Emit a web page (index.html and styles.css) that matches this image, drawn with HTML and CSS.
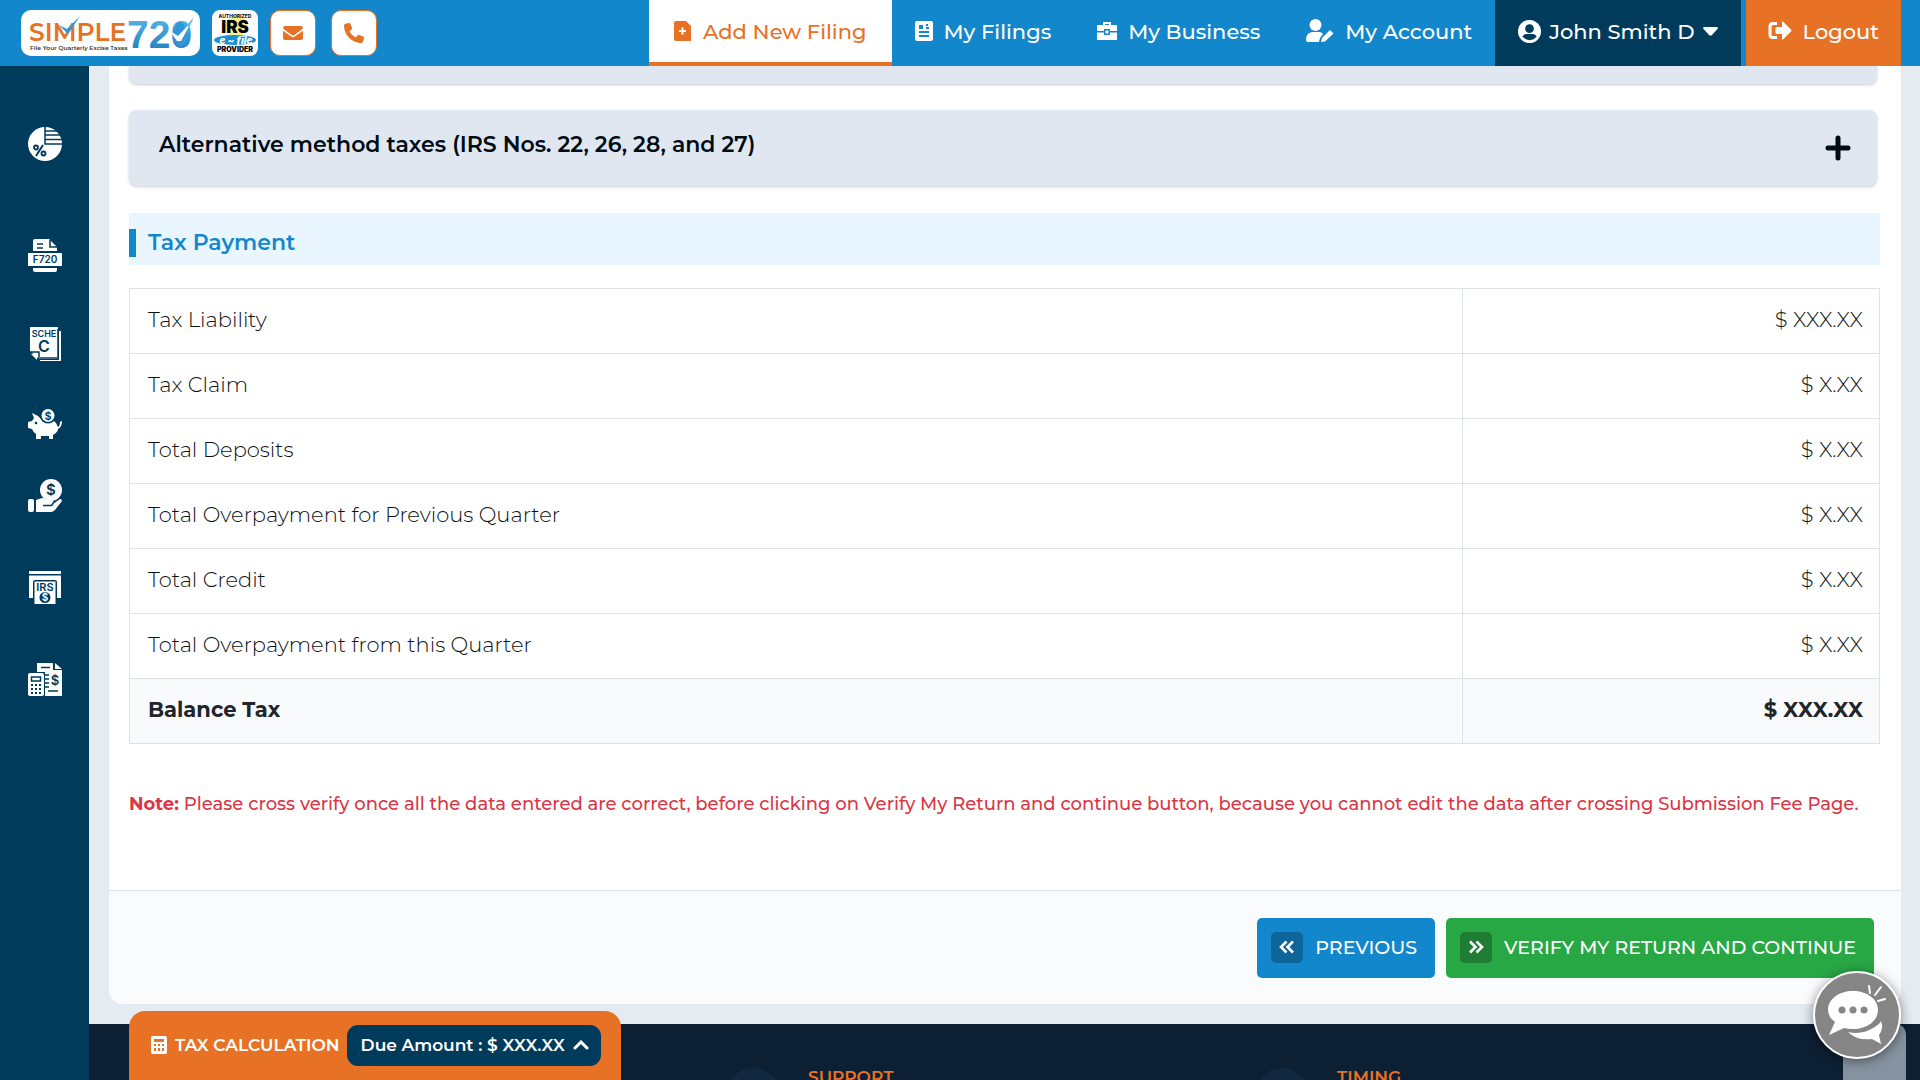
FILE: index.html
```html
<!DOCTYPE html>
<html lang="en">
<head>
<meta charset="utf-8">
<meta name="viewport" content="width=device-width, initial-scale=1">
<title>Simple720 - Tax Payment</title>
<link rel="stylesheet" href="styles.css">
</head>
<body>
<header class="topbar">
  <div class="brand">
    <a class="logo" href="#" aria-label="Simple720 home">
      <svg width="179" height="46" viewBox="0 0 179 46">
        <defs>
          <linearGradient id="blue" x1="0" y1="0" x2="0" y2="1"><stop offset="0" stop-color="#5cbcec"/><stop offset="1" stop-color="#1b78bd"/></linearGradient>
        </defs>
        <text x="8" y="31" class="logo-word">SIMPLE</text>
        <text x="9" y="40" class="logo-tag">File Your Quarterly Excise Taxes</text>
        <text x="106" y="38" class="logo-num" fill="url(#blue)">720</text>
        <ellipse cx="159" cy="24" rx="6" ry="12" fill="#2f97d6"/>
        <path d="M38 15l9 9 12-18-13 13z" fill="#2f97d6"/>
        <path d="M149 21l8 5 14-15-11 20h-4z" fill="#fff"/>
        <path d="M166 15l7-8-5 11z" fill="#5cbcec"/>
      </svg>
    </a>
    <a class="badge" href="#" aria-label="Authorized IRS e-file provider">
      <svg width="46" height="46" viewBox="0 0 46 46">
        <circle cx="25" cy="16" r="11" fill="#f7f08a"/>
        <ellipse cx="23" cy="30" rx="21" ry="5" fill="#1c8fd0"/>
        <text x="23" y="8" class="b-small" text-anchor="middle">AUTHORIZED</text>
        <text x="23" y="23" class="b-irs" text-anchor="middle">IRS</text>
        <text x="24" y="34" class="b-efile" text-anchor="middle">e ~ file</text>
        <text x="23" y="42" class="b-prov" text-anchor="middle">PROVIDER</text>
      </svg>
    </a>
    <a class="contact" href="#" aria-label="Email">
      <svg width="20" height="16" viewBox="0 0 20 16"><path d="M2 1h16a2 2 0 0 1 1.500 3L11 10.300a2 2 0 0 1-2 0L.5 4A2 2 0 0 1 2 1zM0 5.800l8.300 5.800a3 3 0 0 0 3.400 0L20 5.800V13a2 2 0 0 1-2 2H2a2 2 0 0 1-2-2z" fill="#e77225"/></svg>
    </a>
    <a class="contact" href="#" aria-label="Call">
      <svg width="20" height="20" viewBox="0 0 512 512"><path fill="#e77225" d="M165 25c-8-19-28-29-48-23L29 26C12 31 0 46 0 64c0 247 201 448 448 448 18 0 33-12 38-29l24-88c6-20-4-40-23-48l-96-40c-16-7-35-2-46 12l-41 49C234 335 177 278 144 208l49-40c14-12 19-30 12-47z"/></svg>
    </a>
  </div>
  <nav class="nav">
    <a class="nav-link active" href="#">
      <svg width="18" height="20" viewBox="0 0 18 20"><path d="M2 0h10l5 5v15H2q-2 0-2-2V2q0-2 2-2z" fill="currentColor"/><path d="M8.500 6.500v7M5 10h7" stroke="#fff" stroke-width="2"/></svg>
      <span>Add New Filing</span></a>
    <a class="nav-link" href="#">
      <svg width="18" height="20" viewBox="0 0 18 20"><rect width="18" height="20" rx="2" fill="currentColor"/><path d="M4 5h4M4 7h4M11 4h2M11 7h3M4 11h10M4 15h10" stroke="#1387cc" stroke-width="2"/></svg>
      <span>My Filings</span></a>
    <a class="nav-link" href="#">
      <svg width="20" height="20" viewBox="0 0 20 20"><path d="M6 4V1h8v3h5q1 0 1 1v5h-7V8H7v2H0V5q0-1 1-1zm2 0h4V3H8zM0 11.500h7V14h6v-2.500h7V19H0z" fill="currentColor" fill-rule="evenodd"/><rect x="8.500" y="9.500" width="3" height="3" fill="currentColor"/></svg>
      <span>My Business</span></a>
    <a class="nav-link" href="#">
      <svg width="28" height="24" viewBox="0 0 28 24"><circle cx="9.500" cy="6" r="6" fill="currentColor"/><path d="M6 13h7q3 0 4 2l-3 4-1 4H2q-2 0-2-2 0-7 6-8zM15 23l1-4 8-8 3.500 3.500-8.500 8z" fill="currentColor"/></svg>
      <span>My Account</span></a>
    <button class="nav-link user" type="button">
      <svg width="23" height="23" viewBox="0 0 24 24"><circle cx="12" cy="12" r="12" fill="currentColor"/><circle cx="12" cy="9" r="4.500" fill="#003b5c"/><path d="M4.500 17q2-2.500 4-2.500h7q2 0 4 2.500-3 4-7.500 4t-7.500-4z" fill="#003b5c"/></svg>
      <span>John Smith D</span>
      <svg width="15" height="9" viewBox="0 0 15 9"><path d="M1 0h13q1.500.5.500 2L8.500 8.500h-2L.5 2Q-.5.500 1 0z" fill="currentColor"/></svg></button>
    <a class="nav-link logout" href="#">
      <svg width="24" height="20" viewBox="0 0 24 20"><path d="M9 2.500H5Q2 2.500 2 5.500v8q0 3 3 3h4" fill="none" stroke="currentColor" stroke-width="3"/><path d="M14 1.500q0-2 1.500-.5l7.500 7.500q1 1 0 2L15.500 18q-1.500 1.500-1.500-.5V13H9q-1.500 0-1.500-1.500v-4Q7.500 6 9 6h5z" fill="currentColor"/></svg>
      <span>Logout</span></a>
  </nav>
</header>

<div class="shell">
  <aside class="sidebar">
    <a href="#" class="s1" aria-label="Tax rates"><svg width="34" height="34" viewBox="0 0 34 34"><circle cx="17" cy="17" r="17" fill="#fff"/><path d="M17 0v17h17M17 4h13M17 8h15M17 12.500h17" stroke="#003b5c" stroke-width="1.500" fill="none"/><path d="M15 18L8 29" stroke="#003b5c" stroke-width="2"/><g fill="none" stroke="#003b5c" stroke-width="1.800"><circle cx="8" cy="20.500" r="2"/><circle cx="15.500" cy="26.500" r="2"/></g></svg></a>
    <a href="#" class="s2" aria-label="Form 720"><svg width="34" height="34" viewBox="0 0 34 34"><path d="M5 12V2q0-2 2-2h14l8 8v4zM5 29h24v2q0 2-2 2H7q-2 0-2-2zM0 14h34v13H0z" fill="#fff"/><path d="M9 5h6M9 9h6M22 1v7h7" stroke="#003b5c" stroke-width="1.600" fill="none"/><text x="17" y="24" class="ic" font-size="10" text-anchor="middle">F720</text></svg></a>
    <a href="#" class="s3" aria-label="Schedule C"><svg width="32" height="34" viewBox="0 0 32 34"><path d="M1 0h28v32H10L1 24zM30 4h2v30H11v-1h19z" fill="#fff"/><path d="M1 25h9v8M29 2v29H11" stroke="#003b5c" stroke-width="1.500" fill="none"/><path d="M2 27h6v6z" fill="#fff"/><text x="15" y="10" class="ic" font-size="9" text-anchor="middle">SCHE</text><text x="15" y="25" class="ic" font-size="16" text-anchor="middle">C</text></svg></a>
    <a href="#" class="s4" aria-label="Deposits"><svg width="34" height="31" viewBox="0 0 34 31"><path d="M4 4l6 3 4 4h11q4 3 5 7 2-1 2-5l2-1q0 6-4 8 0 3-5 6v4h-4v-3h-8v3H8v-5q-3-2-4-5l-4-1v-6l4-1 2-3z" fill="#fff"/><circle cx="20" cy="6.500" r="8" fill="#003b5c"/><circle cx="20" cy="6.500" r="6.500" fill="#fff"/><circle cx="8" cy="14" r="1.300" fill="#003b5c"/><text x="20" y="10.500" class="ic" font-size="11" text-anchor="middle">$</text></svg></a>
    <a href="#" class="s5" aria-label="Credits"><svg width="34" height="34" viewBox="0 0 34 34"><circle cx="23" cy="11" r="11" fill="#fff"/><text x="23" y="16" class="ic" font-size="15" text-anchor="middle">$</text><rect y="20" width="6" height="13" rx="2" fill="#fff"/><path d="M8 21l6-2q3 0 5 2h5q2 1 1 4l7-5q2 0 2 2l-7 9q-2 2-4 2H8z" fill="#fff"/><path d="M15 26.500h8q2-.5 2-3" fill="none" stroke="#003b5c" stroke-width="1.500"/></svg></a>
    <a href="#" class="s6" aria-label="IRS payment"><svg width="32" height="34" viewBox="0 0 32 34"><path d="M0 0h32v3H0zM0 4.500h32V27h-4V11q0-2-2-2H6q-2 0-2 2v16H0z" fill="#fff"/><path d="M5.500 10.500h21V33h-21z" fill="#fff"/><text x="16" y="20" class="ic" font-size="11" text-anchor="middle">IRS</text><circle cx="16" cy="26.500" r="5.500" fill="#003b5c"/><text x="16" y="30" class="ic light" font-size="10" text-anchor="middle">$</text></svg></a>
    <a href="#" class="s7" aria-label="Tax calculator"><svg width="34" height="34" viewBox="0 0 34 34"><path d="M9 9V0h16v7h9v26H17V9zM27 0l7 6h-7z" fill="#fff"/><rect y="10" width="16" height="23" rx="2" fill="#fff"/><path d="M13 4.500h9M17 12h4M17 16h4M17 20h4M17 24h4M20 28h10" stroke="#003b5c" stroke-width="1.700"/><rect x="3.500" y="14" width="9" height="4" fill="none" stroke="#003b5c" stroke-width="1.500"/><path d="M3 22h10M3 26h10M3 30h10" stroke="#003b5c" stroke-width="2" stroke-dasharray="2 2"/><text x="27" y="22" class="ic" font-size="13" text-anchor="middle">$</text></svg></a>
  </aside>

  <div class="page">
    <main class="card">
      <div class="card-body">
        <div class="accordion-tail"></div>
        <button class="accordion" type="button">
          <span>Alternative method taxes (IRS Nos. 22, 26, 28, and 27)</span>
          <svg width="26" height="26" viewBox="0 0 26 26"><path d="M13 3v20M3 13h20" stroke="#000c14" stroke-width="5" stroke-linecap="round"/></svg>
        </button>
        <h2 class="section-title">Tax Payment</h2>
        <table class="payments">
          <tbody>
            <tr><th scope="row">Tax Liability</th><td>$ XXX.XX</td></tr>
            <tr><th scope="row">Tax Claim</th><td>$ X.XX</td></tr>
            <tr><th scope="row">Total Deposits</th><td>$ X.XX</td></tr>
            <tr><th scope="row">Total Overpayment for Previous Quarter</th><td>$ X.XX</td></tr>
            <tr><th scope="row">Total Credit</th><td>$ X.XX</td></tr>
            <tr><th scope="row">Total Overpayment from this Quarter</th><td>$ X.XX</td></tr>
            <tr class="balance"><th scope="row">Balance Tax</th><td>$ XXX.XX</td></tr>
          </tbody>
        </table>
        <p class="note"><strong>Note:</strong> Please cross verify once all the data entered are correct, before clicking on Verify My Return and continue button, because you cannot edit the data after crossing Submission Fee Page.</p>
      </div>
      <div class="actions">
        <button class="btn prev" type="button"><span class="btn-icon"><svg width="16" height="14" viewBox="0 0 16 14"><path d="M7.500 1.500L2 7l5.500 5.500M14 1.500L8.500 7l5.500 5.500" fill="none" stroke="#fff" stroke-width="2.600"/></svg></span>PREVIOUS</button>
        <button class="btn next" type="button"><span class="btn-icon"><svg width="16" height="14" viewBox="0 0 16 14"><path d="M2 1.500L7.500 7 2 12.500M8.500 1.500L14 7l-5.500 5.500" fill="none" stroke="#fff" stroke-width="2.600"/></svg></span>VERIFY MY RETURN AND CONTINUE</button>
      </div>
    </main>
    <footer class="footer">
      <section class="foot-col"><span class="foot-dot"></span><h3>SUPPORT</h3></section>
      <section class="foot-col"><span class="foot-dot"></span><h3>TIMING</h3></section>
    </footer>
  </div>
</div>

<div class="calc-tab">
  <svg width="16" height="18" viewBox="0 0 16 18"><path d="M2 0h12q2 0 2 2v14q0 2-2 2H2q-2 0-2-2V2q0-2 2-2zm1 3v3h10V3zm0 5v2h2V8zm4 0v2h2V8zm4 0v2h2V8zm-8 4v3h2v-3zm4 0v3h2v-3zm4 0v3h2v-3z" fill="#fff" fill-rule="evenodd"/></svg>
  <span class="calc-title">TAX CALCULATION</span>
  <button class="due" type="button">Due Amount : $ XXX.XX
    <svg width="16" height="10" viewBox="0 0 16 10"><path d="M2 8l6-6 6 6" fill="none" stroke="#fff" stroke-width="3" stroke-linecap="round"/></svg></button>
</div>
<button class="to-top" type="button" aria-label="Back to top"></button>
<button class="chat" type="button" aria-label="Open chat">
  <svg width="88" height="88" viewBox="0 0 88 88">
    <circle cx="44" cy="44" r="43" fill="#858585" stroke="#fff" stroke-width="2"/>
    <path d="M35 61q14 3 25-4 7-4 8-7 3 7-2 14l2 9-9-5q-15 2-24-7z" fill="#fff"/>
    <path d="M40 20c14 0 25 8 25 19S54 58 40 58q-5 0-9-1l-15 7 6-13q-7-5-7-12c0-11 11-19 25-19z" fill="#fff"/>
    <g fill="#858585"><circle cx="29" cy="39" r="3.500"/><circle cx="40" cy="39" r="3.500"/><circle cx="51" cy="39" r="3.500"/></g>
    <path d="M57 22l-1-7M62 24l6-8M65 30l7-2" stroke="#fff" stroke-width="2" stroke-linecap="round"/>
  </svg>
</button>
</body>
</html>
```
FILE: styles.css
```css
* { box-sizing: border-box; }
html { scrollbar-width: none; }
body { margin: 0; font-family: Montserrat, Inter, "Open Sans", sans-serif; color: #212529; background: #e4ebf1; }
button { font-family: inherit; border: 0; cursor: pointer; }
a { text-decoration: none; color: inherit; }
svg { display: block; flex: none; }

.topbar { position: sticky; top: 0; z-index: 10; height: 66px; display: flex; justify-content: space-between; background: #1387cc; padding: 0 19px 0 21px; }
.brand { display: flex; align-items: center; gap: 12px; }
.logo { background: #fff; border-radius: 10px; }
.logo-word { font: 600 25px Montserrat, Inter, sans-serif; fill: #e77225; }
.logo-tag { font: 600 6px Montserrat, Inter, sans-serif; fill: #333; }
.logo-num { font-family: "Liberation Sans", sans-serif; font-weight: 700; font-size: 39px; }
.badge { background: #fff; border-radius: 8px; }
.b-small { font: 700 5px Inter, sans-serif; }
.b-irs { font: 900 17px Inter, sans-serif; }
.b-efile { font: italic 800 10px Inter, sans-serif; fill: #fff; }
.b-prov { font: 900 7px Inter, sans-serif; }
.contact { width: 46px; height: 46px; background: #fff; border: 1px solid #e77225; border-radius: 10px; display: grid; place-items: center; }
.contact + .contact { margin-left: 3px; }

.nav { display: flex; color: #fff; }
.nav-link { display: flex; align-items: center; gap: 11px; padding: 0 23px 4px; font-size: 21px; font-weight: 500; white-space: nowrap; }
.nav-link.active { background: #fff; color: #e77225; border-bottom: 4px solid #e77225; padding: 0 25px; }
.nav-link.user { background: #003b5c; color: #fff; gap: 8px; }
.nav-link.logout { background: #e77225; margin-left: 5px; padding: 0 22px 4px; }

.shell { display: flex; }
.sidebar { flex: none; width: 89px; position: sticky; top: 66px; height: calc(100vh - 66px); background: #003b5c; display: flex; flex-direction: column; align-items: center; padding-top: 61px; }
.ic { font-family: Inter, sans-serif; font-weight: 600; fill: #003b5c; }
.ic.light { fill: #fff; }
.s2 { margin-top: 78px; }
.s3 { margin-top: 54px; }
.s4 { margin-top: 48px; }
.s5 { margin-top: 39px; }
.s6 { margin-top: 58px; }
.s7 { margin-top: 58px; }

.page { flex: 1; min-width: 0; display: flex; flex-direction: column; }
.card { margin: 0 19px 20px 20px; background: #fff; border-radius: 0 0 14px 14px; overflow: hidden; }
.card-body { padding: 0 21px 74px 20px; }
.accordion-tail { height: 18px; margin: 0 3px 26px 0; background: #e1e7f0; border-radius: 0 0 8px 8px; box-shadow: 0 1px 3px rgba(0, 0, 0, .2); }
.accordion { display: flex; justify-content: space-between; align-items: center; width: calc(100% - 3px); height: 76px; padding: 0 26px 0 30px; background: #e1e7f0; border-radius: 8px; box-shadow: 0 1px 3px rgba(0, 0, 0, .2); color: #000c14; font-size: 22px; font-weight: 600; }
.accordion span { padding-bottom: 7px; }
.section-title { display: flex; align-items: center; gap: 12px; margin: 27px 0 23px; height: 52px; padding-top: 7px; background: #e9f6ff; color: #1387cc; font-size: 22px; font-weight: 600; }
.section-title::before { content: ""; width: 7px; height: 28px; background: #1387cc; }
.payments { width: 100%; border-collapse: collapse; font-size: 21px; color: #0c0f12; }
.payments th, .payments td { height: 65px; border: 1px solid #dee2e6; padding: 0 16px 3px 18px; font-weight: 300; text-align: left; }
.payments td { width: 417px; text-align: right; }
.payments .balance { background: #f8fafc; color: #212529; }
.payments .balance th, .payments .balance td { font-weight: 700; }
.note { margin: 48px 0 0; color: #dc3545; font-size: 18px; font-weight: 500; line-height: 24px; }
.actions { display: flex; justify-content: flex-end; gap: 11px; padding: 27px 27px 26px; border-top: 1px solid #dee2e6; background: #f9fbfd; }
.btn { display: flex; align-items: center; gap: 12px; height: 60px; padding: 0 18px 2px 14px; border-radius: 5px; color: #fff; font-size: 19px; font-weight: 500; white-space: nowrap; }
.btn-icon { width: 32px; height: 31px; border-radius: 5px; background: rgba(0, 0, 0, .25); display: grid; place-items: center; }
.prev { background: #1387cc; }
.next { background: #28a745; }

.footer { display: flex; background: #0d1f33; padding: 44px 0 40px 637px; }
.foot-col { display: flex; gap: 28px; width: 529px; }
.foot-dot { width: 54px; height: 54px; border-radius: 50%; background: #12283f; }
.foot-col h3 { margin: 0; font-size: 17px; line-height: 18px; font-weight: 600; color: #e77225; }

.calc-tab { position: fixed; left: 129px; bottom: 0; z-index: 5; height: 69px; display: flex; align-items: flex-start; padding: 14px 20px 0 22px; background: #e77225; border-radius: 16px 16px 0 0; color: #fff; }
.calc-tab > svg { margin-top: 11px; }
.calc-title { margin: 0 7px 0 8px; font-size: 17px; font-weight: 600; line-height: 40px; }
.due { display: flex; align-items: center; gap: 8px; height: 41px; padding: 0 12px 2px 14px; background: #003b5c; color: #fff; border-radius: 11px; font-size: 17px; font-weight: 600; }
.to-top { position: fixed; right: 14px; bottom: 0; width: 63px; height: 56px; background: #8592a0; border-radius: 10px 10px 0 0; }
.chat { position: fixed; right: 19px; bottom: 21px; width: 88px; height: 88px; padding: 0; border-radius: 50%; background: none; box-shadow: 0 2px 12px rgba(0, 0, 0, .45); }
```
